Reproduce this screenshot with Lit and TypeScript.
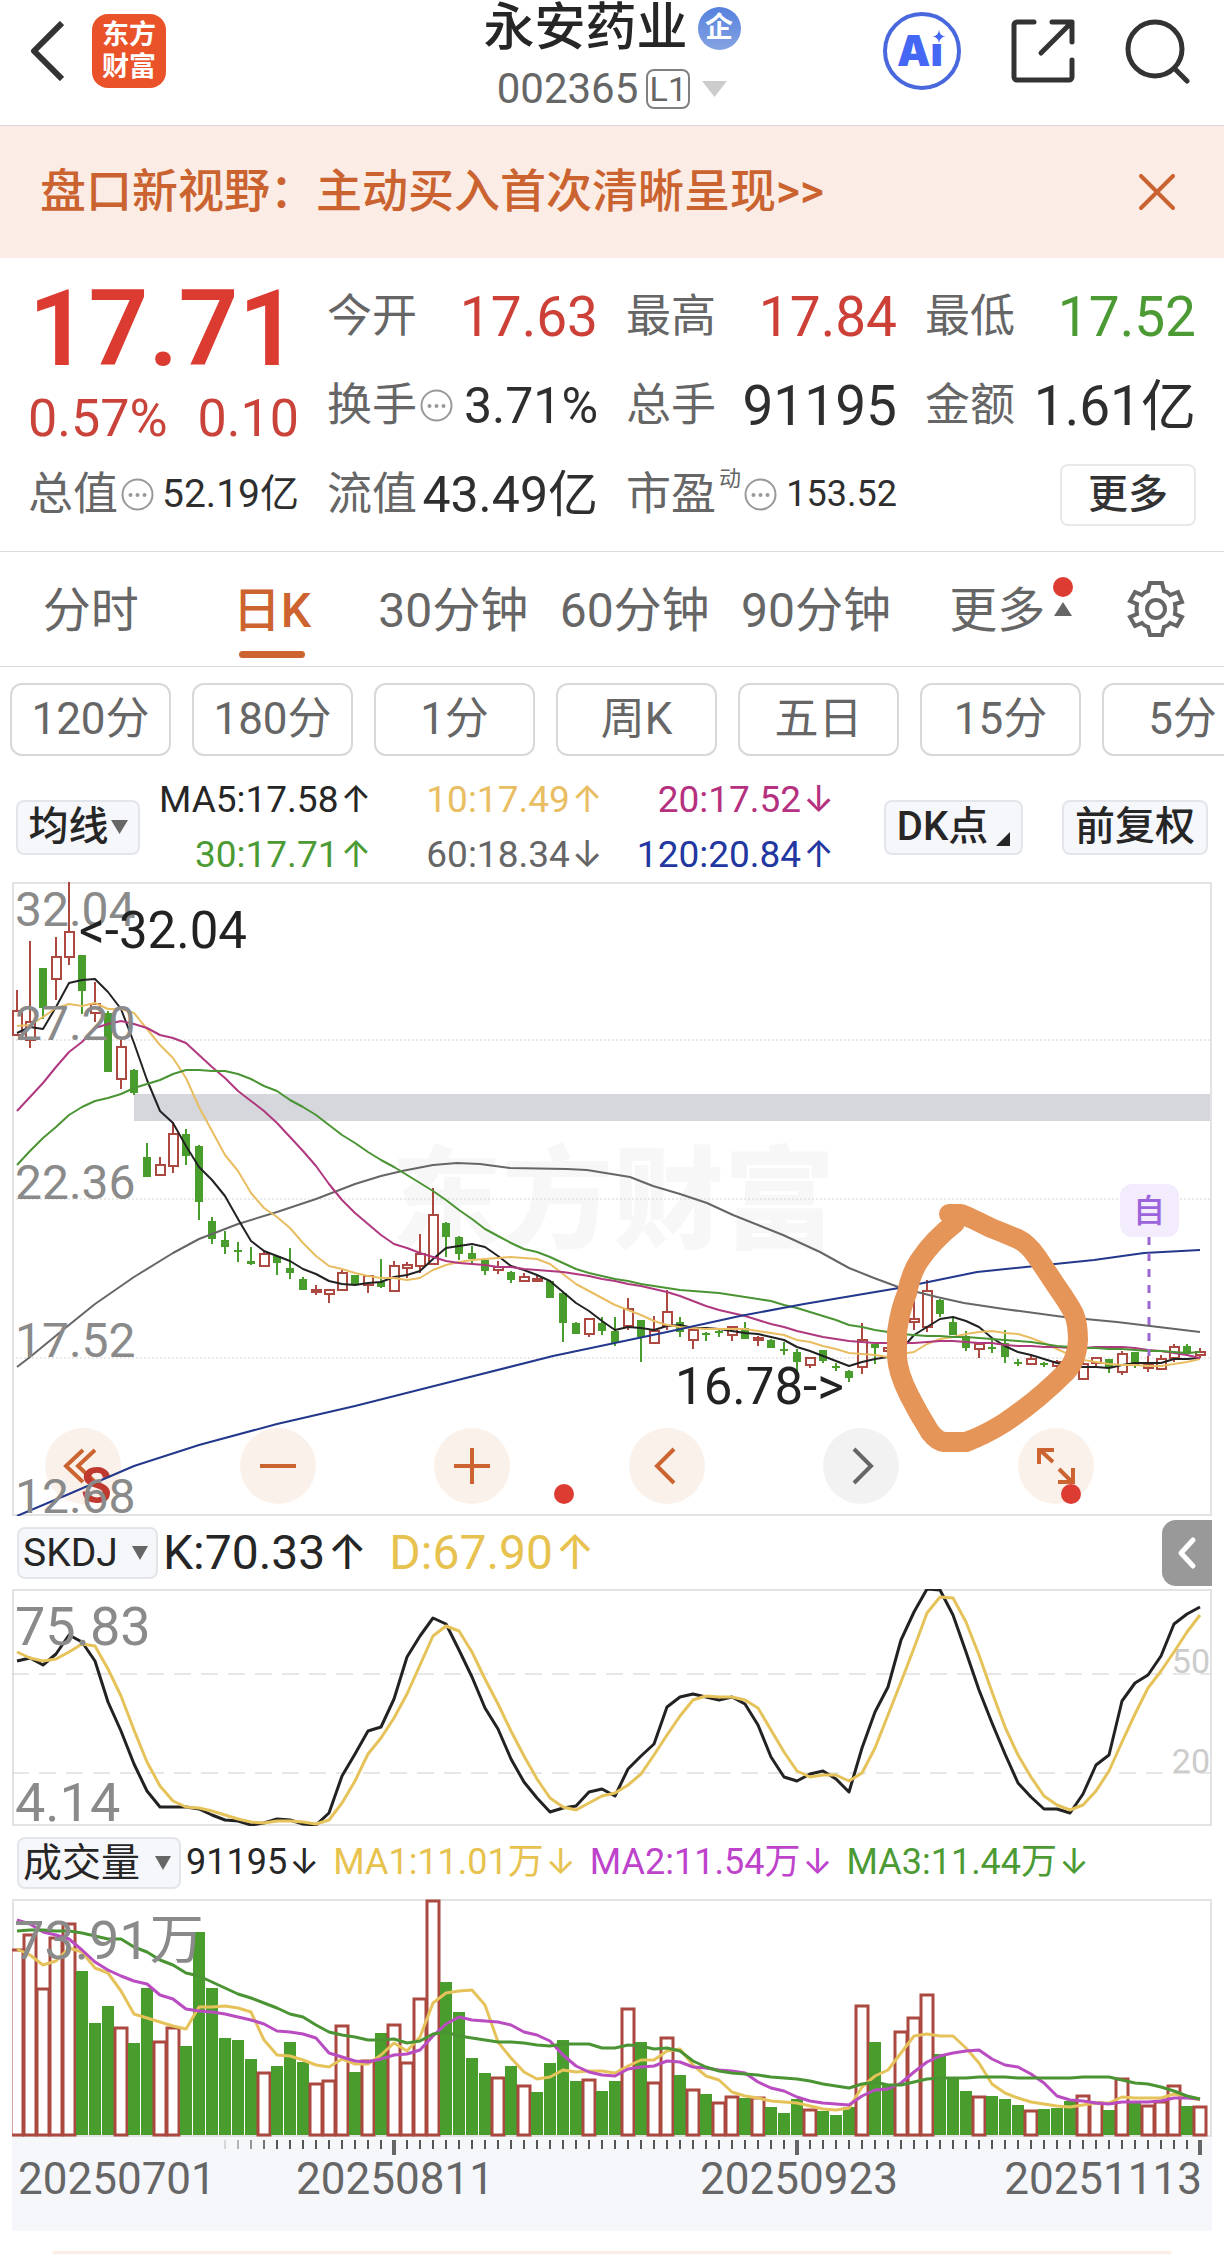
import { LitElement, html, svg, css } from "lit";
import { customElement, state } from "lit/decorators.js";
import { classMap } from "lit/directives/class-map.js";

type Candle = [number, number, number, number, number]; // up(1)/down(0), high, body top, body bottom, low

const X0 = 17;
const STEP = 13;
const xAt = (i: number) => X0 + STEP * i;

const CANDLES: Candle[] = [
  [1, 990, 1011, 1035, 1035], [1, 941, 1022, 1040, 1048], [0, 968, 968, 1008, 1019], [1, 937, 957, 979, 1000],
  [1, 882, 932, 957, 965], [0, 955, 955, 991, 1014], [1, 982, 1004, 1013, 1022], [0, 1011, 1013, 1072, 1072],
  [1, 1040, 1047, 1079, 1089], [0, 1069, 1070, 1093, 1095], [0, 1143, 1157, 1177, 1177], [1, 1157, 1165, 1175, 1175],
  [1, 1122, 1134, 1166, 1173], [0, 1129, 1134, 1156, 1165], [0, 1145, 1146, 1202, 1220], [0, 1217, 1221, 1239, 1244],
  [0, 1231, 1240, 1247, 1254], [0, 1242, 1250, 1252, 1262], [0, 1247, 1261, 1264, 1265], [1, 1251, 1254, 1266, 1266],
  [0, 1255, 1256, 1263, 1275], [0, 1248, 1268, 1273, 1279], [0, 1277, 1279, 1290, 1290], [1, 1285, 1290, 1291, 1295],
  [1, 1289, 1290, 1294, 1303], [1, 1270, 1273, 1290, 1290], [0, 1275, 1275, 1285, 1285], [1, 1276, 1276, 1285, 1293],
  [0, 1259, 1282, 1287, 1288], [1, 1261, 1266, 1291, 1291], [1, 1262, 1265, 1268, 1278], [1, 1234, 1254, 1266, 1273],
  [1, 1188, 1215, 1264, 1264], [0, 1222, 1223, 1237, 1257], [0, 1236, 1237, 1254, 1260], [0, 1246, 1253, 1259, 1263],
  [0, 1259, 1260, 1271, 1275], [1, 1261, 1267, 1270, 1274], [0, 1271, 1272, 1280, 1283], [1, 1273, 1277, 1281, 1281],
  [1, 1276, 1279, 1280, 1282], [0, 1280, 1281, 1298, 1298], [0, 1292, 1293, 1323, 1342], [0, 1322, 1323, 1334, 1334],
  [1, 1318, 1319, 1334, 1337], [0, 1317, 1323, 1331, 1335], [0, 1317, 1331, 1343, 1346], [1, 1298, 1309, 1326, 1330],
  [0, 1320, 1320, 1337, 1362], [1, 1316, 1331, 1343, 1343], [1, 1290, 1312, 1326, 1330], [0, 1317, 1322, 1332, 1337],
  [1, 1329, 1330, 1340, 1349], [0, 1332, 1333, 1335, 1341], [0, 1329, 1331, 1333, 1337], [1, 1327, 1327, 1335, 1341],
  [0, 1322, 1328, 1339, 1339], [1, 1336, 1338, 1340, 1346], [0, 1339, 1340, 1348, 1348], [0, 1342, 1349, 1351, 1355],
  [0, 1349, 1352, 1362, 1372], [1, 1357, 1358, 1365, 1368], [0, 1350, 1350, 1361, 1363], [0, 1363, 1366, 1367, 1371],
  [0, 1370, 1371, 1378, 1382], [1, 1323, 1340, 1367, 1374], [0, 1343, 1344, 1348, 1364], [1, 1347, 1348, 1351, 1353],
  [1, 1338, 1342, 1350, 1355], [1, 1297, 1319, 1322, 1330], [1, 1280, 1291, 1327, 1332], [0, 1299, 1300, 1314, 1317],
  [0, 1317, 1322, 1335, 1335], [0, 1331, 1336, 1348, 1351], [1, 1343, 1344, 1349, 1358], [0, 1338, 1347, 1349, 1353],
  [0, 1330, 1343, 1357, 1363], [0, 1359, 1362, 1364, 1366], [1, 1356, 1359, 1364, 1364], [0, 1362, 1363, 1365, 1367],
  [1, 1360, 1362, 1366, 1368], [0, 1368, 1372, 1378, 1381], [1, 1360, 1364, 1379, 1379], [1, 1358, 1358, 1363, 1366],
  [0, 1359, 1359, 1367, 1373], [1, 1351, 1354, 1372, 1375], [0, 1352, 1352, 1366, 1368], [1, 1356, 1365, 1368, 1372],
  [1, 1355, 1359, 1369, 1369], [1, 1344, 1347, 1358, 1362], [0, 1344, 1346, 1354, 1356], [1, 1348, 1352, 1355, 1358],
];

const MA5 = [
  1033, 1027, 1029, 1007, 983, 980, 979, 992, 1009, 1043, 1080, 1111, 1123, 1146, 1167, 1180, 1196, 1219, 1241, 1251,
  1256, 1261, 1269, 1274, 1281, 1284, 1285, 1283, 1282, 1277, 1275, 1271, 1259, 1248, 1246, 1244, 1247, 1256, 1266, 1270,
  1275, 1281, 1292, 1303, 1311, 1321, 1330, 1327, 1328, 1330, 1326, 1325, 1328, 1328, 1329, 1331, 1333, 1334, 1337, 1340,
  1347, 1351, 1356, 1361, 1366, 1362, 1359, 1357, 1350, 1335, 1327, 1319, 1317, 1321, 1327, 1338, 1346, 1352, 1355, 1359,
  1363, 1366, 1367, 1367, 1368, 1365, 1363, 1363, 1363, 1359, 1359, 1358,
];
const MA10 = [
  1026, 1025, 1017, 1008, 1004, 1006, 1003, 1009, 1009, 1013, 1029, 1045, 1058, 1078, 1107, 1131, 1155, 1171, 1193, 1208,
  1217, 1228, 1243, 1256, 1266, 1269, 1273, 1276, 1278, 1278, 1280, 1278, 1270, 1265, 1262, 1260, 1259, 1258, 1257, 1258,
  1259, 1264, 1274, 1284, 1291, 1298, 1305, 1310, 1315, 1321, 1325, 1327, 1328, 1329, 1329, 1329, 1329, 1331, 1333, 1335,
  1340, 1342, 1346, 1349, 1353, 1354, 1355, 1357, 1354, 1352, 1344, 1339, 1337, 1334, 1332, 1331, 1333, 1334, 1338, 1343,
  1349, 1355, 1360, 1362, 1364, 1365, 1365, 1366, 1366, 1364, 1362, 1359,
];
const MA20 = [
  1111, 1097, 1083, 1067, 1052, 1042, 1028, 1024, 1021, 1024, 1028, 1035, 1038, 1043, 1055, 1067, 1078, 1091, 1101, 1111,
  1123, 1137, 1151, 1166, 1184, 1200, 1213, 1224, 1235, 1244, 1248, 1253, 1257, 1261, 1263, 1264, 1265, 1267, 1267, 1269,
  1270, 1271, 1272, 1274, 1276, 1279, 1281, 1284, 1286, 1289, 1292, 1296, 1301, 1306, 1310, 1313, 1316, 1320, 1324, 1327,
  1331, 1334, 1337, 1339, 1341, 1342, 1343, 1343, 1343, 1343, 1342, 1341, 1341, 1342, 1343, 1343, 1345, 1346, 1346, 1347,
  1347, 1348, 1348, 1347, 1347, 1347, 1348, 1350, 1351, 1353, 1355, 1358,
];
const MA30 = [
  1165, 1151, 1138, 1127, 1115, 1107, 1101, 1098, 1094, 1088, 1084, 1080, 1074, 1070, 1070, 1071, 1071, 1074, 1079, 1086,
  1091, 1100, 1107, 1115, 1125, 1135, 1143, 1152, 1160, 1167, 1175, 1183, 1191, 1200, 1210, 1219, 1229, 1236, 1243, 1249,
  1252, 1257, 1263, 1269, 1273, 1276, 1279, 1281, 1284, 1286, 1288, 1290, 1291, 1292, 1293, 1295, 1297, 1299, 1301, 1305,
  1308, 1312, 1316, 1320, 1325, 1327, 1330, 1332, 1334, 1335, 1336, 1336, 1337, 1337, 1338, 1339, 1340, 1341, 1342, 1344,
  1346, 1347, 1348, 1348, 1349, 1349, 1350, 1351, 1351, 1352, 1353, 1352,
];
const MA60 =
  "17,1367 30,1357 69,1325 95,1304 134,1277 173,1253 199,1239 238,1224 277,1212 316,1199 355,1184 381,1176 402,1171 433,1165 457,1163 480,1164 510,1168 567,1169 587,1170 630,1177 653,1186 680,1194 707,1203 733,1215 783,1235 820,1252 849,1268 874,1278 901,1288 937,1297 964,1303 1004,1309 1064,1317 1117,1322 1200,1332";
const MA120 =
  "17,1516 69,1494 134,1466 199,1445 277,1424 355,1406 450,1382 553,1356 667,1332 740,1316 804,1304 899,1288 977,1272 1094,1260 1144,1253 1200,1250";

const SKDJ_K = [
  1661, 1658, 1665, 1654, 1635, 1642, 1661, 1702, 1731, 1764, 1791, 1807, 1807, 1807, 1809, 1815, 1820, 1821, 1825, 1823,
  1819, 1820, 1824, 1825, 1813, 1776, 1754, 1731, 1727, 1699, 1657, 1636, 1618, 1624, 1650, 1677, 1708, 1729, 1759, 1782,
  1798, 1812, 1808, 1806, 1792, 1789, 1796, 1769, 1756, 1744, 1707, 1697, 1694, 1697, 1700, 1697, 1704, 1725, 1757, 1777,
  1781, 1774, 1771, 1779, 1792, 1748, 1712, 1687, 1640, 1612, 1589, 1590, 1615, 1652, 1690, 1723, 1754, 1783, 1797, 1809,
  1809, 1813, 1794, 1765, 1755, 1701, 1683, 1675, 1656, 1624, 1614, 1607,
];
const SKDJ_D = [
  1652, 1658, 1661, 1659, 1652, 1644, 1646, 1669, 1696, 1730, 1762, 1786, 1801, 1807, 1808, 1811, 1815, 1819, 1822, 1823,
  1821, 1821, 1822, 1824, 1820, 1803, 1781, 1754, 1738, 1718, 1694, 1665, 1636, 1626, 1631, 1652, 1679, 1704, 1731, 1756,
  1779, 1798, 1807, 1810, 1803, 1796, 1793, 1785, 1774, 1755, 1735, 1716, 1700, 1696, 1697, 1697, 1700, 1708, 1730, 1752,
  1771, 1777, 1775, 1775, 1781, 1773, 1748, 1715, 1682, 1648, 1613, 1597, 1598, 1622, 1655, 1692, 1727, 1755, 1777, 1796,
  1805, 1810, 1805, 1791, 1771, 1742, 1714, 1688, 1671, 1652, 1632, 1615,
];

const VOLUME_TOPS = [
  1949, 1934, 1988, 1937, 1923, 1971, 2023, 2006, 2027, 2043, 1988, 2041, 2027, 2046, 1932, 1988, 2038, 2040, 2059, 2072,
  2066, 2042, 2062, 2083, 2080, 2025, 2072, 2060, 2033, 2024, 2062, 1998, 1900, 1982, 2012, 2058, 2073, 2077, 2066, 2085,
  2092, 2063, 2040, 2081, 2079, 2091, 2081, 2008, 2042, 2082, 2037, 2075, 2089, 2094, 2102, 2096, 2098, 2097, 2107, 2113,
  2099, 2109, 2111, 2115, 2107, 2005, 2042, 2084, 2031, 2017, 1994, 2054, 2079, 2091, 2096, 2096, 2099, 2105, 2110, 2109,
  2108, 2101, 2095, 2102, 2110, 2078, 2103, 2105, 2101, 2085, 2106, 2106,
];
const VOLUME_UP = new Set([
  0, 1, 2, 3, 4, 8, 11, 12, 19, 23, 24, 25, 27, 29, 30, 31, 32, 37, 39, 44, 47, 49, 50, 52, 54, 55, 57, 61, 65, 68, 69,
  70, 74, 78, 82, 83, 85, 87, 88, 89, 91,
]);
const VOL_MA1 = [
  1949, 1955, 1965, 1961, 1948, 1952, 1968, 1973, 1991, 2014, 2018, 2022, 2026, 2029, 2007, 2007, 2006, 2008, 2012, 2040,
  2055, 2056, 2060, 2065, 2067, 2059, 2064, 2064, 2055, 2043, 2051, 2037, 2003, 1993, 1991, 1990, 2005, 2042, 2058, 2072,
  2079, 2077, 2070, 2072, 2071, 2071, 2073, 2066, 2060, 2060, 2051, 2049, 2065, 2076, 2080, 2092, 2096, 2098, 2101, 2102,
  2103, 2106, 2109, 2110, 2108, 2087, 2076, 2070, 2053, 2036, 2034, 2036, 2036, 2048, 2063, 2084, 2093, 2098, 2102, 2104,
  2106, 2107, 2105, 2103, 2103, 2097, 2098, 2098, 2098, 2094, 2097, 2100,
];
const VOL_MA2 = [
  1920, 1924, 1932, 1935, 1939, 1950, 1962, 1970, 1976, 1981, 1984, 1995, 1999, 2009, 2011, 2012, 2014, 2017, 2020, 2024,
  2031, 2032, 2034, 2038, 2053, 2057, 2061, 2062, 2059, 2055, 2054, 2050, 2036, 2024, 2017, 2020, 2021, 2022, 2025, 2032,
  2035, 2041, 2055, 2066, 2072, 2075, 2076, 2069, 2067, 2066, 2061, 2062, 2067, 2068, 2070, 2071, 2073, 2082, 2088, 2091,
  2097, 2101, 2103, 2104, 2105, 2096, 2090, 2089, 2083, 2072, 2062, 2056, 2053, 2051, 2050, 2059, 2065, 2067, 2074, 2083,
  2096, 2100, 2101, 2103, 2104, 2102, 2102, 2102, 2101, 2098, 2098, 2099,
];
const VOL_MA3 = [
  1931, 1930, 1930, 1931, 1931, 1933, 1936, 1939, 1939, 1947, 1952, 1960, 1965, 1973, 1976, 1982, 1988, 1994, 1998, 2003,
  2008, 2014, 2017, 2025, 2032, 2035, 2037, 2040, 2040, 2039, 2043, 2041, 2034, 2032, 2036, 2038, 2040, 2042, 2042, 2043,
  2045, 2046, 2044, 2044, 2044, 2048, 2048, 2045, 2046, 2049, 2048, 2051, 2061, 2067, 2071, 2073, 2074, 2075, 2077, 2078,
  2079, 2081, 2084, 2086, 2088, 2084, 2082, 2085, 2085, 2082, 2079, 2078, 2078, 2078, 2077, 2077, 2077, 2078, 2078, 2078,
  2078, 2078, 2077, 2077, 2077, 2080, 2083, 2084, 2087, 2091, 2096, 2099,
];

const line = (ys: number[], cls: string) =>
  svg`<polyline class="line ${cls}" points=${ys.map((y, i) => `${xAt(i)},${y}`).join(" ")} />`;

const FONT = css`
  :host {
    display: block;
    font-family: Roboto, "Noto Sans CJK SC", sans-serif;
    line-height: 1.2;
  }
  * {
    box-sizing: border-box;
  }
  button,
  select {
    font: inherit;
    color: inherit;
    margin: 0;
    padding: 0;
    border: 0;
    background: none;
    appearance: none;
  }
  svg {
    display: block;
    flex: none;
  }
  .arrow {
    margin-left: 2px;
    font-family: Inter, sans-serif;
  }
`;

const CHART = css`
  .plot {
    width: 100%;
    height: auto;
  }
  .frame {
    fill: none;
    stroke: #e3e3e3;
    stroke-width: 2;
  }
  .line {
    fill: none;
    stroke-width: 2;
    stroke-linejoin: round;
  }
  .thick .line {
    stroke-width: 3;
  }
  .black { stroke: #222; }
  .gold { stroke: #e9bd62; }
  .thick .gold { stroke: #e5c35a; }
  .magenta { stroke: #b0387f; }
  .green { stroke: #4b9434; }
  .grey { stroke: #666; }
  .blue { stroke: #23388c; }
  .purple { stroke: #b94cc0; }
  .up { fill: #fff; stroke: #ab483f; }
  .wick-up { stroke: #ab483f; }
  .down { fill: #499d2d; stroke: none; }
  .wick-down { stroke: #499d2d; }
  .price { font-size: 48px; fill: #8a8a8a; }
  .scale { font-size: 54px; fill: #8a8a8a; }
  .level { font-size: 34px; fill: #ccc; }
`;

@customElement("app-header")
class AppHeader extends LitElement {
  static styles = [
    FONT,
    css`
      .bar {
        display: grid;
        grid-template-columns: 1fr auto 1fr;
        height: 126px;
        border-bottom: 1px solid #d9d6d6;
      }
      .side {
        display: flex;
        align-items: center;
        height: 102px;
      }
      .left { padding-left: 30px; gap: 28px; }
      .right { justify-content: flex-end; gap: 50px; padding-right: 34px; }
      .logo {
        display: grid;
        place-content: center;
        width: 74px;
        height: 74px;
        border-radius: 16px;
        background: #ea5329;
        color: #fff;
        font-size: 27px;
        font-weight: 700;
        line-height: 32px;
        text-decoration: none;
      }
      .mid { display: flex; flex-direction: column; align-items: center; gap: 8px; }
      .name { display: flex; align-items: center; gap: 10px; height: 56px; }
      h1 { margin: 0; font-size: 51px; line-height: 56px; font-weight: 500; color: #262626; }
      .ent {
        display: grid;
        place-content: center;
        width: 43px;
        height: 43px;
        border-radius: 50%;
        background: linear-gradient(#5580dd, #84a3e2);
        color: #fff;
        font-size: 28px;
        line-height: 40px;
        font-weight: 700;
      }
      .code { display: flex; align-items: center; height: 50px; font-size: 42px; color: #666; }
      .lvl {
        display: grid;
        place-content: center;
        width: 44px;
        height: 40px;
        margin: 0 12px 0 8px;
        border: 2px solid #808080;
        border-radius: 8px;
        font-size: 34px;
        line-height: 36px;
      }
      .ai { font: 900 42px Inter, sans-serif; fill: #4567f5; }
    `,
  ];
  render() {
    return html`
      <header class="bar">
        <div class="side left">
          <button aria-label="返回">
            <svg width="34" height="60" viewBox="0 0 34 60" fill="none" stroke="#333" stroke-width="6" stroke-linejoin="round"><path d="M32 2 4 30l28 28" /></svg>
          </button>
          <a class="logo" href="#home"><span>东方</span><span>财富</span></a>
        </div>
        <div class="mid">
          <div class="name"><h1>永安药业</h1><span class="ent">企</span></div>
          <div class="code">
            <span>002365</span><span class="lvl">L1</span>
            <svg width="25" height="16" viewBox="0 0 25 16" fill="#ccc"><path d="M0 0h25L12.500 16z" /></svg>
          </div>
        </div>
        <div class="side right">
          <button aria-label="Ai">
            <svg width="78" height="78" viewBox="0 0 78 78">
              <circle cx="39" cy="39" r="37" fill="none" stroke="#4a68dd" stroke-width="4" />
              <text class="ai" x="14" y="54">Ai</text>
              <path fill="#fff" d="M46 15h19v17H46z" />
              <path fill="#4567f5" d="M56 18q1 6 6.500 6.500Q57 25 56 31q-1-6-6.500-6.500Q55 24 56 18z" />
            </svg>
          </button>
          <button aria-label="分享">
            <svg width="64" height="64" viewBox="0 0 64 64" fill="none" stroke="#333" stroke-width="5" stroke-linecap="round" stroke-linejoin="round">
              <path d="M23 3H6a3 3 0 0 0-3 3v52a3 3 0 0 0 3 3h52a3 3 0 0 0 3-3V41" />
              <path d="M41 3h20v20M60 4 30 34" />
            </svg>
          </button>
          <button aria-label="搜索">
            <svg width="65" height="65" viewBox="0 0 65 65" fill="none" stroke="#333" stroke-width="5" stroke-linecap="round">
              <circle cx="30" cy="30" r="27" /><path d="M51 51l11 11" />
            </svg>
          </button>
        </div>
      </header>
    `;
  }
}

@customElement("app-quote")
class AppQuote extends LitElement {
  static styles = [
    FONT,
    css`
      .notice {
        display: flex;
        align-items: center;
        justify-content: space-between;
        height: 132px;
        padding: 0 49px 0 40px;
        background: #fbede5;
        color: #ca6330;
        font-size: 46px;
        font-weight: 500;
      }
      .notice a { color: inherit; text-decoration: none; }
      .quote {
        display: grid;
        grid-template-columns: repeat(4, 1fr);
        grid-auto-rows: 89px;
        gap: 0 28px;
        margin: 0;
        padding: 14px 28px 12px;
        border-bottom: 1px solid #d9dbdb;
      }
      .price {
        grid-row: span 2;
        display: flex;
        flex-direction: column;
      }
      .last { font-size: 105px; font-weight: 600; line-height: 116px; text-align: center; color: #dc3b32; }
      .chg { display: flex; justify-content: space-between; font-size: 52px; line-height: 62px; color: #c9433a; }
      .cell { display: flex; align-items: center; justify-content: space-between; white-space: nowrap; }
      dt { display: flex; align-items: center; gap: 3px; font-size: 45px; color: #666; }
      dd { margin: 0; color: #2e2e2e; }
      sup { align-self: flex-start; font-size: 22px; line-height: 22px; }
      .xl { font-size: 55px; }
      .l { font-size: 50px; }
      .m { font-size: 39px; }
      .s { font-size: 36px; }
      .red { color: #cd4038; }
      .green { color: #4c9a33; }
      .more {
        justify-self: end;
        align-self: center;
        width: 136px;
        height: 62px;
        border: 2px solid #e8e8e8;
        border-radius: 8px;
        font-size: 40px;
        font-weight: 500;
        color: #333;
      }
    `,
  ];
  private dots = html`<svg width="33" height="33" viewBox="0 0 33 33">
    <circle cx="16.500" cy="16.500" r="15" fill="none" stroke="#999" stroke-width="2" />
    <g fill="#999"><circle cx="9.500" cy="17" r="2" /><circle cx="16.500" cy="17" r="2" /><circle cx="23.500" cy="17" r="2" /></g>
  </svg>`;
  private cell(label: string, value: string, cls: string, info = false, sup = "") {
    return html`<div class="cell">
      <dt><span>${label}</span>${sup ? html`<sup>${sup}</sup>` : ""}${info ? this.dots : ""}</dt>
      <dd class=${cls}>${value}</dd>
    </div>`;
  }
  render() {
    return html`
      <div class="notice">
        <a href="#notice">盘口新视野：主动买入首次清晰呈现&gt;&gt;</a>
        <button aria-label="关闭">
          <svg width="36" height="36" viewBox="0 0 36 36" stroke="#ca6330" stroke-width="4" stroke-linecap="round"><path d="M2 2l32 32M34 2 2 34" /></svg>
        </button>
      </div>
      <dl class="quote">
        <div class="price">
          <dd class="last">17.71</dd>
          <dd class="chg"><span>0.57%</span><span>0.10</span></dd>
        </div>
        ${this.cell("今开", "17.63", "xl red")} ${this.cell("最高", "17.84", "xl red")}
        ${this.cell("最低", "17.52", "xl green")} ${this.cell("换手", "3.71%", "l", true)}
        ${this.cell("总手", "91195", "xl")} ${this.cell("金额", "1.61亿", "xl")}
        ${this.cell("总值", "52.19亿", "m", true)} ${this.cell("流值", "43.49亿", "l")}
        ${this.cell("市盈", "153.52", "s", true, "动")}
        <button class="more">更多</button>
      </dl>
    `;
  }
}

@customElement("app-periods")
class AppPeriods extends LitElement {
  @state() private active = "日K";
  static styles = [
    FONT,
    css`
      .tabs {
        display: flex;
        align-items: center;
        height: 115px;
        border-bottom: 1px solid #d9dbdb;
        font-size: 48px;
        color: #666;
      }
      .tab {
        flex: 4;
        display: flex;
        flex-direction: column;
        align-items: center;
        gap: 5px;
        line-height: 70px;
        padding: 20px 0 5px;
        white-space: nowrap;
      }
      .tab::after { content: ""; width: 66px; height: 7px; border-radius: 4px; }
      .on { color: #cd6430; font-weight: 500; }
      .on::after { background: #cd6430; }
      .wrap { position: relative; }
      .dot { position: absolute; left: 104px; top: 1px; width: 20px; height: 20px; border-radius: 50%; background: #dd3c33; }
      .tri { position: absolute; left: 105px; top: 26px; }
      .gear { flex: 3; display: flex; justify-content: center; }
      .chips {
        display: flex;
        gap: 21px;
        padding: 16px 0 0 10px;
        overflow: hidden;
        font-size: 44px;
        color: #666;
      }
      .chip {
        flex: none;
        width: 161px;
        height: 73px;
        border: 2px solid #d8d8d8;
        border-radius: 12px;
      }
      .ma { display: flex; align-items: center; height: 126px; padding: 16px 16px 0; color: #262626; }
      .tag {
        display: flex;
        align-items: center;
        justify-content: center;
        height: 55px;
        border: 2px solid #e2e5ea;
        border-radius: 8px;
        background: #f6f7fa;
        font-size: 40px;
        line-height: 50px;
        font-weight: 500;
      }
      .avg { width: 124px; gap: 2px; }
      .dk { width: 139px; margin: 0 39px 0 50px; gap: 8px; }
      .dk svg { align-self: flex-end; margin-bottom: 7px; }
      .adj { width: 146px; }
      .values {
        flex: 1;
        display: grid;
        grid-template-columns: repeat(3, 1fr);
        font-size: 37px;
        line-height: 54px;
        text-align: right;
        white-space: nowrap;
      }
      .c10 { color: #e9bd62; }
      .c20 { color: #b5307f; }
      .c30 { color: #4c9a33; }
      .c60 { color: #666; }
      .c120 { color: #22379f; }
    `,
  ];
  render() {
    const tabs = ["分时", "日K", "30分钟", "60分钟", "90分钟"];
    return html`
      <nav class="tabs">
        ${tabs.map(
          (t) => html`<button class=${classMap({ tab: true, on: t === this.active })} @click=${() => (this.active = t)}>${t}</button>`
        )}
        <button class="tab">
          <span class="wrap">更多<i class="dot"></i>
            <svg class="tri" width="18" height="14" viewBox="0 0 18 14" fill="#666"><path d="M9 0l9 14H0z" /></svg></span>
        </button>
        <div class="gear">
          <button aria-label="设置">
            <svg width="58" height="58" viewBox="-29 -29 58 58" fill="none" stroke="#666" stroke-width="4">
              <circle r="9" />
              <path d="M-6-26H6L8-18Q12-17 14-14L22-17 26-7 19-5Q20 0 19 5L26 8 21 17 14 14Q12 17 8 18L6 26H-6L-8 18Q-12 17-14 14L-21 17-26 8-19 5Q-20 0-19-5L-26-8-21-17-14-14Q-12-17-8-18Z" />
            </svg>
          </button>
        </div>
      </nav>
      <div class="chips">
        ${["120分", "180分", "1分", "周K", "五日", "15分", "5分"].map((c) => html`<button class="chip">${c}</button>`)}
      </div>
      <div class="ma">
        <label class="tag avg">
          <select aria-label="均线"><option>均线</option></select>
          <svg width="17" height="14" viewBox="0 0 17 14" fill="#666"><path d="M0 0h17L8.500 14z" /></svg>
        </label>
        <div class="values">
          <span>MA5:17.58<span class="arrow">↑</span></span>
          <span class="c10">10:17.49<span class="arrow">↑</span></span>
          <span class="c20">20:17.52<span class="arrow">↓</span></span>
          <span class="c30">30:17.71<span class="arrow">↑</span></span>
          <span class="c60">60:18.34<span class="arrow">↓</span></span>
          <span class="c120">120:20.84<span class="arrow">↑</span></span>
        </div>
        <button class="tag dk">DK点<svg width="14" height="14" viewBox="0 0 14 14" fill="#262626"><path d="M14 0v14H0z" /></svg></button>
        <button class="tag adj">前复权</button>
      </div>
    `;
  }
}

@customElement("app-kline")
class AppKline extends LitElement {
  static styles = [
    FONT,
    CHART,
    css`
      .box { position: relative; margin: 0 12px; }
      .plot { position: relative; pointer-events: none; }
      .tools {
        position: absolute;
        left: 33px;
        right: 118px;
        bottom: 12px;
        display: flex;
        justify-content: space-between;
      }
      .tool { width: 76px; height: 76px; border-radius: 50%; background: #fbf1eb; color: #cb6431; }
      .off { background: #f2f2f2; color: #666; }
      .grid { stroke: #d4d4d4; stroke-width: 1; stroke-dasharray: 2 2; }
      .mark { font-size: 51px; fill: #222; }
      .water { font-size: 111px; font-weight: 900; fill: #f7f7f7; }
      .sell { font-size: 50px; font-weight: 700; fill: #c0392f; }
      .own { font-size: 32px; font-weight: 500; fill: #9b64db; }
    `,
  ];
  private tool(label: string, d: string, off = false) {
    return html`<button class=${classMap({ tool: true, off })} aria-label=${label}>
      <svg width="76" height="76" viewBox="-38 -38 76 76" fill="none" stroke="currentColor" stroke-width="4"><path d=${d} /></svg>
    </button>`;
  }
  render() {
    return html`<div class="box">
      <div class="tools">
        ${this.tool("最早", "M0-16-17 0 0 16M12-16-5 0 12 16")}
        ${this.tool("缩小", "M-18 0H18")}
        ${this.tool("放大", "M-18 0H18M0-18V18")}
        ${this.tool("向左", "M7-17-10 0 7 17")}
        ${this.tool("向右", "M-7-17 10 0-7 17", true)}
        ${this.tool("全屏", "M-3-4-16-16M-17-2V-16H-2M3 3 16 16M17 2V16H2")}
      </div>
      <svg class="plot" viewBox="12 882 1200 634">
        <text class="water" x="391" y="1240">东方财富</text>
        <path class="grid" d="M12 1040H1211M12 1199H1211M12 1358H1211" />
        <rect x="134" y="1094" width="1077" height="27" fill="#d6d7dc" />
        <rect class="frame" x="13" y="883" width="1198" height="632" />
        <text class="sell" x="81" y="1503">S</text>
        ${CANDLES.map(([up, hi, top, bottom, lo], i) => {
          const x = xAt(i);
          const h = Math.max(bottom - top, 2);
          return up
            ? svg`<g stroke-width="2"><path class="wick-up" d=${`M${x} ${hi}V${top}M${x} ${bottom}V${lo}`} /><rect class="up" x=${x - 4} y=${top} width="9" height=${h} /></g>`
            : svg`<path class="wick-down" stroke-width="2" d=${`M${x} ${hi}V${lo}`} /><rect class="down" x=${x - 4} y=${top} width="8" height=${h} />`;
        })}
        <polyline class="line grey" points=${MA60} />
        ${line(MA5, "black")} ${line(MA10, "gold")} ${line(MA20, "magenta")} ${line(MA30, "green")}
        <polyline class="line blue" points=${MA120} />
        <text class="price" x="15" y="926">32.04</text>
        <text class="price" x="15" y="1040">27.20</text>
        <text class="price" x="15" y="1199">22.36</text>
        <text class="price" x="15" y="1357">17.52</text>
        <text class="price" x="15" y="1513">12.68</text>
        <text class="mark" x="247" y="948" text-anchor="end">&lt;-32.04</text>
        <text class="mark" x="675" y="1404">16.78-&gt;</text>
        <path d="M1149 1237V1356" stroke="#9a68ce" stroke-width="3" stroke-dasharray="8 8" />
        <rect x="1120" y="1184" width="59" height="53" rx="12" fill="#f3ecfd" />
        <text class="own" x="1149" y="1222" text-anchor="middle">自</text>
        <g fill="#dd3c33"><circle cx="564" cy="1494" r="10" /><circle cx="1071" cy="1494" r="10" /></g>
        <path fill="none" stroke="#e69558" stroke-width="20" stroke-linecap="round" stroke-linejoin="round"
          d="M949 1214H961Q967 1216 991 1228Q1004 1233 1018 1239Q1028 1244 1037 1257L1057 1287Q1069 1304 1074 1314Q1078 1324 1078 1340Q1077 1360 1066 1372Q1036 1402 1004 1423Q985 1435 966 1442H944Q937 1441 930 1432Q918 1413 909 1395Q898 1373 897 1357V1332Q900 1310 907 1293Q911 1273 919 1261Q933 1240 955 1223" />
      </svg>
    </div>`;
  }
}

@customElement("app-indicators")
class AppIndicators extends LitElement {
  static styles = [
    FONT,
    CHART,
    css`
      .box { margin: 0 12px; }
      .row { display: flex; align-items: center; height: 73px; padding-left: 5px; white-space: nowrap; color: #262626; }
      .pick {
        display: flex;
        align-items: center;
        gap: 14px;
        height: 52px;
        padding: 0 8px 0 4px;
        margin-right: 5px;
        border: 2px solid #e2e5ea;
        border-radius: 8px;
        background: #f6f7fa;
        font-size: 39px;
        line-height: 46px;
      }
      .vals { display: flex; gap: 22px; font-size: 48px; }
      .nums { display: flex; gap: 14px; font-size: 36px; }
      .fold {
        display: grid;
        place-content: center;
        width: 50px;
        height: 66px;
        margin-left: auto;
        border-radius: 14px 0 0 14px;
        background: #999;
      }
      .y { color: #e7c24f; }
      .p { color: #be43cb; }
      .g { color: #4c9a33; }
      .dash { stroke: #cfcfcf; stroke-width: 1; stroke-dasharray: 17 10; }
      .vol .up { stroke-width: 3; }
      .axis { background: #f6f7fa; }
      .date { font-size: 44px; fill: #666; }
      .tick { stroke: #555; stroke-width: 2; }
      .major { stroke: #666; stroke-width: 4; }
      .sheet { height: 3px; margin: 20px 52px 0; border-radius: 24px 24px 0 0; background: #fbeee6; }
    `,
  ];
  private tri = html`<svg width="16" height="14" viewBox="0 0 16 14" fill="#666"><path d="M0 0h16L8 14z" /></svg>`;
  render() {
    return html`
      <div class="box">
        <div class="row">
          <label class="pick"><select aria-label="SKDJ"><option>SKDJ</option></select>${this.tri}</label>
          <div class="vals">
            <span>K:70.33<span class="arrow">↑</span></span>
            <span class="y">D:67.90<span class="arrow">↑</span></span>
          </div>
          <button class="fold" aria-label="收起">
            <svg width="20" height="34" viewBox="0 0 20 34" fill="none" stroke="#fff" stroke-width="5" stroke-linecap="round" stroke-linejoin="round"><path d="M16 4 4 17l12 13" /></svg>
          </button>
        </div>
        <svg class="plot thick" viewBox="12 1589 1200 237">
          <rect class="frame" x="13" y="1590" width="1198" height="235" />
          <path class="dash" d="M12 1674H1211M12 1773H1211" />
          <text class="level" x="1210" y="1673" text-anchor="end">50</text>
          <text class="level" x="1210" y="1773" text-anchor="end">20</text>
          ${line(SKDJ_K, "black")} ${line(SKDJ_D, "gold")}
          <text class="scale" x="15" y="1645">75.83</text>
          <text class="scale" x="15" y="1821">4.14</text>
        </svg>
        <div class="row">
          <label class="pick"><select aria-label="成交量"><option>成交量</option></select>${this.tri}</label>
          <div class="nums">
            <span>91195<span class="arrow">↓</span></span>
            <span class="y">MA1:11.01万<span class="arrow">↓</span></span>
            <span class="p">MA2:11.54万<span class="arrow">↓</span></span>
            <span class="g">MA3:11.44万<span class="arrow">↓</span></span>
          </div>
        </div>
        <svg class="plot thick vol" viewBox="12 1899 1200 238">
          <rect class="frame" x="13" y="1900" width="1198" height="236" />
          ${VOLUME_TOPS.map((top, i) =>
            VOLUME_UP.has(i)
              ? svg`<rect class="up" x=${xAt(i) - 6} y=${top + 1} width="12" height=${2134 - top} />`
              : svg`<rect class="down" x=${xAt(i) - 6} y=${top} width="12" height=${2135 - top} />`
          )}
          ${line(VOL_MA1, "gold")} ${line(VOL_MA2, "purple")} ${line(VOL_MA3, "green")}
          <text class="scale" x="14" y="1959">73.91万</text>
        </svg>
        <svg class="plot axis" viewBox="12 2137 1200 94">
          ${Array.from({ length: 76 }, (_, k) => k + 16).map((i) =>
            i % 31 === 29
              ? svg`<path class="major" d=${`M${xAt(i)} 2140v15`} />`
              : svg`<path class="tick" opacity=${Math.min(1, (i - 15) / 5)} d=${`M${xAt(i)} 2140v9`} />`
          )}
          <text class="date" x="18" y="2194">20250701</text>
          <text class="date" x="395" y="2194" text-anchor="middle">20250811</text>
          <text class="date" x="799" y="2194" text-anchor="middle">20250923</text>
          <text class="date" x="1202" y="2194" text-anchor="end">20251113</text>
        </svg>
      </div>
      <div class="sheet"></div>
    `;
  }
}

@customElement("app-root")
class AppRoot extends LitElement {
  static styles = css`
    :host {
      display: block;
      background: #fff;
      overflow: hidden;
    }
  `;
  render() {
    return html`
      <app-header></app-header>
      <app-quote></app-quote>
      <app-periods></app-periods>
      <app-kline></app-kline>
      <app-indicators></app-indicators>
    `;
  }
}
